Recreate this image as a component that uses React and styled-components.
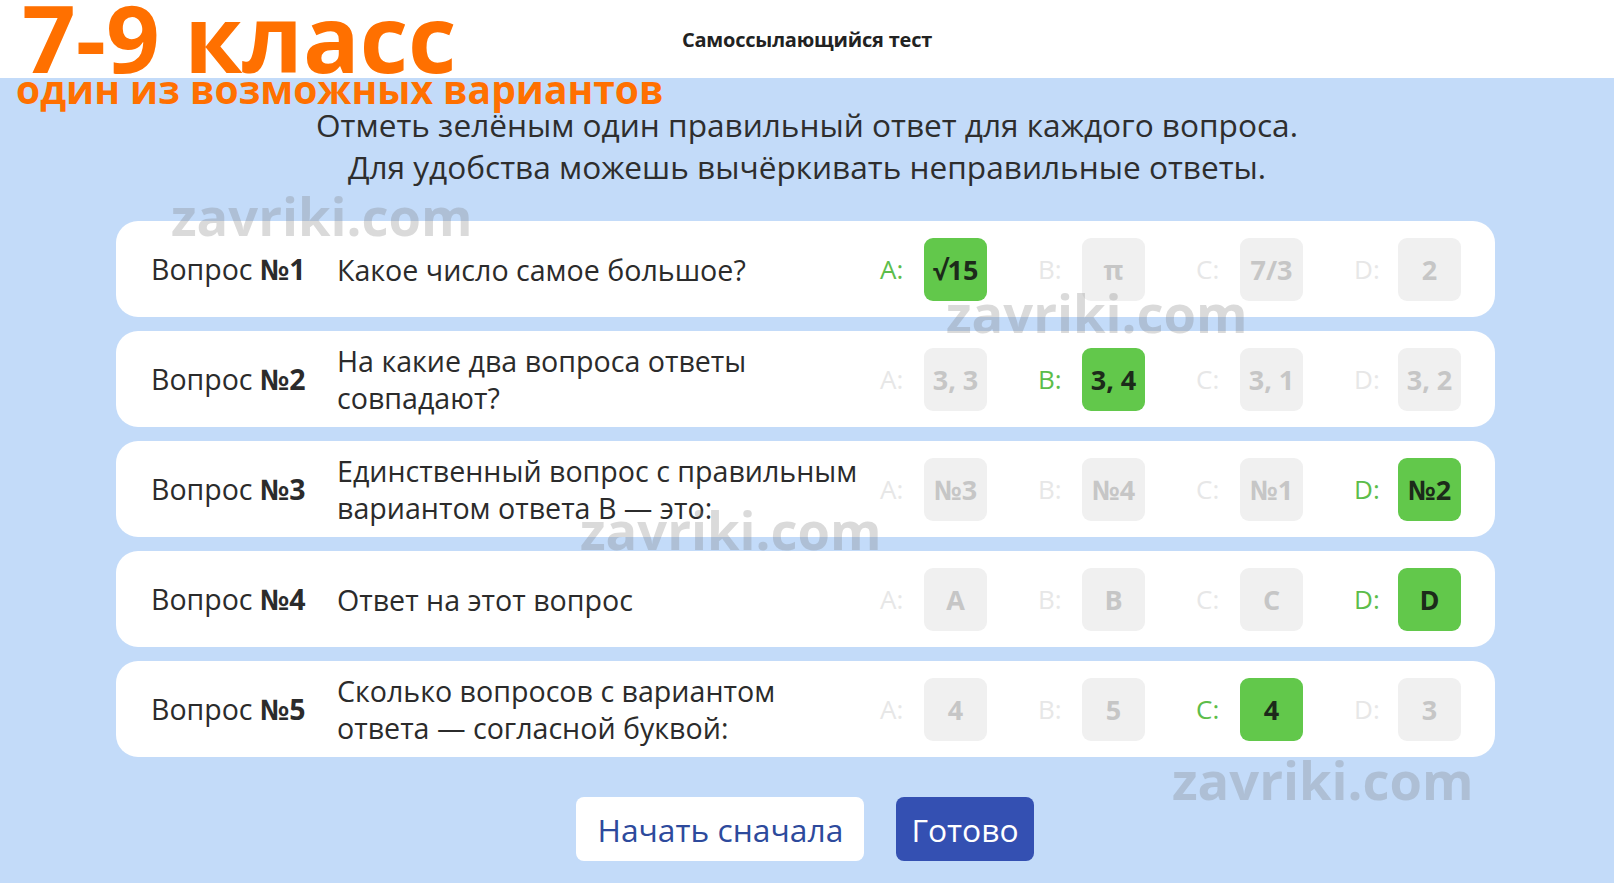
import React from "react";
import styled, { createGlobalStyle } from "styled-components";

const GlobalStyle = createGlobalStyle`
  html, body {
    margin: 0;
    padding: 0;
    background: #c3dbf9;
    font-family: "Open Sans", "Noto Sans", sans-serif;
  }
`;

const Page = styled.div`
  position: relative;
  min-height: 883px;
  overflow: hidden;
`;

const Header = styled.header`
  height: 78px;
  background: #ffffff;
  display: flex;
  align-items: center;
  justify-content: center;
`;

const Title = styled.h1`
  margin: 0;
  font-size: 20px;
  font-weight: 700;
  color: #222;
  letter-spacing: -0.2px;
`;

const Grade = styled.div`
  position: absolute;
  left: 22px;
  top: -10px;
  font-size: 94px;
  line-height: 1;
  font-weight: 700;
  color: #ff7000;
  z-index: 3;
`;

const Variant = styled.div`
  position: absolute;
  left: 16px;
  top: 69px;
  font-size: 39px;
  line-height: 1;
  font-weight: 700;
  color: #ff7000;
  z-index: 3;
`;

const Watermark = styled.div`
  position: absolute;
  font-size: 52.5px;
  line-height: 1;
  font-weight: 700;
  color: rgba(120, 120, 120, 0.27);
  pointer-events: none;
  z-index: 4;
`;

const Main = styled.main`
  display: flex;
  flex-direction: column;
  align-items: center;
  padding-top: 26px;
`;

const Intro = styled.p`
  margin: 0 0 33px;
  text-align: center;
  font-size: 31.6px;
  line-height: 42px;
  color: #2e2e2e;
`;

const List = styled.div`
  display: flex;
  flex-direction: column;
  gap: 14px;
  width: 1379px;
  margin-right: 3px;
`;

const Card = styled.div`
  height: 96px;
  box-sizing: border-box;
  background: #fff;
  border-radius: 22px;
  padding: 0 34px 0 35px;
  display: flex;
  align-items: center;
`;

const Label = styled.div`
  width: 186px;
  flex-shrink: 0;
  font-size: 28.5px;
  color: #2b2b2b;

  b {
    font-weight: 700;
  }
`;

const Question = styled.div`
  flex: 1;
  max-width: 530px;
  font-size: 28.6px;
  line-height: 37px;
  color: #2b2b2b;
`;

const Options = styled.div`
  margin-left: auto;
  display: flex;
  gap: 51px;
`;

const Option = styled.div`
  display: flex;
  align-items: center;
`;

const Letter = styled.span`
  width: 44px;
  font-size: 26px;
  color: ${(p) => (p.$on ? "#5cbd4a" : "#e7e7e7")};
`;

const Box = styled.div`
  width: 63px;
  height: 63px;
  border-radius: 9px;
  display: flex;
  align-items: center;
  justify-content: center;
  font-size: 27px;
  font-weight: 700;
  background: ${(p) => (p.$on ? "#62c84b" : "#f0f0f0")};
  color: ${(p) => (p.$on ? "#1c2a1a" : "#c6c6c6")};
`;

const Buttons = styled.div`
  display: flex;
  gap: 32px;
  margin-top: 40px;
  margin-right: 4px;
`;

const Button = styled.button`
  height: 64px;
  padding: 0 ${(p) => (p.$primary ? "15px" : "21px")};
  border: none;
  border-radius: 8px;
  font-family: "Open Sans", sans-serif;
  font-size: 31.8px;
  cursor: pointer;
  background: ${(p) => (p.$primary ? "#3450b2" : "#ffffff")};
  color: ${(p) => (p.$primary ? "#ffffff" : "#2d4a9c")};
`;

const questions = [
  {
    text: "Какое число самое большое?",
    answers: ["√15", "π", "7/3", "2"],
    correct: 0,
  },
  {
    text: "На какие два вопроса ответы совпадают?",
    answers: ["3, 3", "3, 4", "3, 1", "3, 2"],
    correct: 1,
  },
  {
    text: "Единственный вопрос с правильным вариантом ответа B — это:",
    answers: ["№3", "№4", "№1", "№2"],
    correct: 3,
  },
  {
    text: "Ответ на этот вопрос",
    answers: ["A", "B", "C", "D"],
    correct: 3,
  },
  {
    text: "Сколько вопросов с вариантом ответа — согласной буквой:",
    answers: ["4", "5", "4", "3"],
    correct: 2,
  },
];

const letters = ["A", "B", "C", "D"];

const marks = [
  { left: 171, top: 190 },
  { left: 946, top: 287 },
  { left: 580, top: 504 },
  { left: 1172, top: 754 },
];

export default function App() {
  return (
    <Page>
      <GlobalStyle />
      <Header>
        <Title>Самоссылающийся тест</Title>
      </Header>
      <Grade>7-9 класс</Grade>
      <Variant>один из возможных вариантов</Variant>

      <Main>
        <Intro>
          Отметь зелёным один правильный ответ для каждого вопроса.
          <br />
          Для удобства можешь вычёркивать неправильные ответы.
        </Intro>

        <List>
          {questions.map((q, i) => (
            <Card key={i}>
              <Label>
                Вопрос <b>№{i + 1}</b>
              </Label>
              <Question>{q.text}</Question>
              <Options>
                {q.answers.map((a, j) => (
                  <Option key={j}>
                    <Letter $on={j === q.correct}>{letters[j]}:</Letter>
                    <Box $on={j === q.correct}>{a}</Box>
                  </Option>
                ))}
              </Options>
            </Card>
          ))}
        </List>

        <Buttons>
          <Button>Начать сначала</Button>
          <Button $primary>Готово</Button>
        </Buttons>
      </Main>

      {marks.map((m, i) => (
        <Watermark key={i} style={{ left: m.left, top: m.top }}>
          zavriki.com
        </Watermark>
      ))}
    </Page>
  );
}
